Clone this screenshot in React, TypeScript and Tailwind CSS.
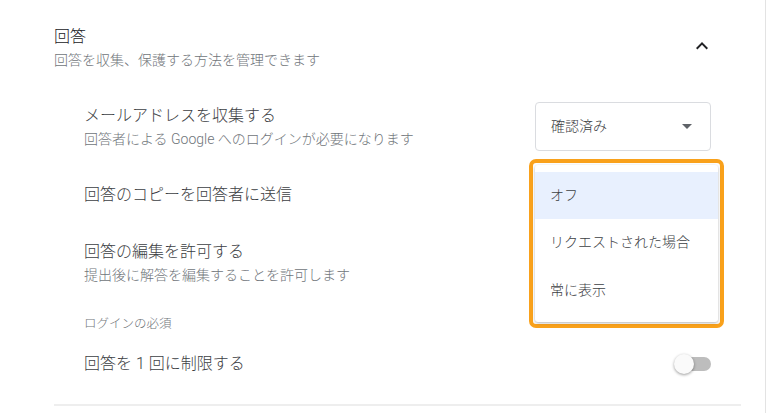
import React from "react";

function Row({ title, sub, right }: { title: string; sub?: string; right?: React.ReactNode }) {
  return (
    <div className="flex items-center justify-between h-full">
      <div className="flex flex-col">
        <div className="text-[16px] leading-[24px] text-[#3c4043]">{title}</div>
        {sub && <div className="text-[14px] leading-[22px] text-[#70757a]">{sub}</div>}
      </div>
      {right}
    </div>
  );
}

export default function App() {
  return (
    <div className="relative w-[766px] h-[413px] overflow-hidden bg-white border-r border-[#e3e3e3] font-light font-['Roboto','Noto_Sans_CJK_JP',sans-serif]">
      <div className="pl-[54px] pr-[54px]">
        <div className="mt-[25px] h-[46px] flex items-center justify-between">
          <div className="flex flex-col">
            <div className="text-[16px] leading-[24px] text-[#202124]">回答</div>
            <div className="text-[14px] leading-[22px] text-[#70757a]">回答を収集、保護する方法を管理できます</div>
          </div>
          <svg width="24" height="24" viewBox="0 0 24 24" className="-mr-[3px] mt-[-4px]">
            <path d="M12 8l-6 6 1.41 1.41L12 10.83l4.59 4.58L18 14z" fill="#202124" />
          </svg>
        </div>

        <div className="pl-[30px]">
          <div className="mt-[31px] h-[49px]">
            <Row
              title="メールアドレスを収集する"
              sub="回答者による Google へのログインが必要になります"
              right={
                <div className="w-[176px] h-[49px] border border-[#dadce0] rounded-[4px] flex items-center justify-between pl-[15px] pr-[18px]">
                  <span className="text-[14px] text-[#3c4043]">確認済み</span>
                  <svg width="10" height="5" viewBox="0 0 10 5">
                    <path d="M0 0l5 5 5-5z" fill="#5f6368" />
                  </svg>
                </div>
              }
            />
          </div>

          <div className="mt-[32px] h-[24px]">
            <Row title="回答のコピーを回答者に送信" />
          </div>

          <div className="mt-[33px]">
            <Row title="回答の編集を許可する" sub="提出後に解答を編集することを許可します" />
          </div>

          <div className="mt-[29px] text-[12.5px] leading-[18px] text-[#70757a]">ログインの必須</div>

          <div className="mt-[19px] h-[24px]">
            <Row
              title="回答を 1 回に制限する"
              right={
                <div className="relative w-[37px] h-[20px]">
                  <div className="absolute right-0 top-[3px] w-[34px] h-[14px] rounded-full bg-[#bdbdbd]" />
                  <div className="absolute left-0 top-0 w-[20px] h-[20px] rounded-full bg-[#fafafa] shadow-[0_1px_3px_rgba(0,0,0,0.4)]" />
                </div>
              }
            />
          </div>
        </div>

        <div className="mt-[28px] mr-[-30px] h-[2px] bg-[#eeeeee]" />
      </div>

      <div className="absolute left-[529px] top-[159px] w-[195px] h-[169px] border-[4px] border-[#f9a11b] rounded-[7px] p-[2px]">
        <div className="w-full h-full bg-white rounded-[3px] shadow-[0_1px_3px_rgba(0,0,0,0.3)] py-[7px] flex flex-col">
          <div className="h-[47px] flex items-center pl-[15px] bg-[#e8f0fe] text-[14px] text-[#3c4043]">オフ</div>
          <div className="h-[47px] flex items-center pl-[15px] text-[14px] text-[#3c4043]">リクエストされた場合</div>
          <div className="h-[48px] flex items-center pl-[15px] text-[14px] text-[#3c4043]">常に表示</div>
        </div>
      </div>
    </div>
  );
}
